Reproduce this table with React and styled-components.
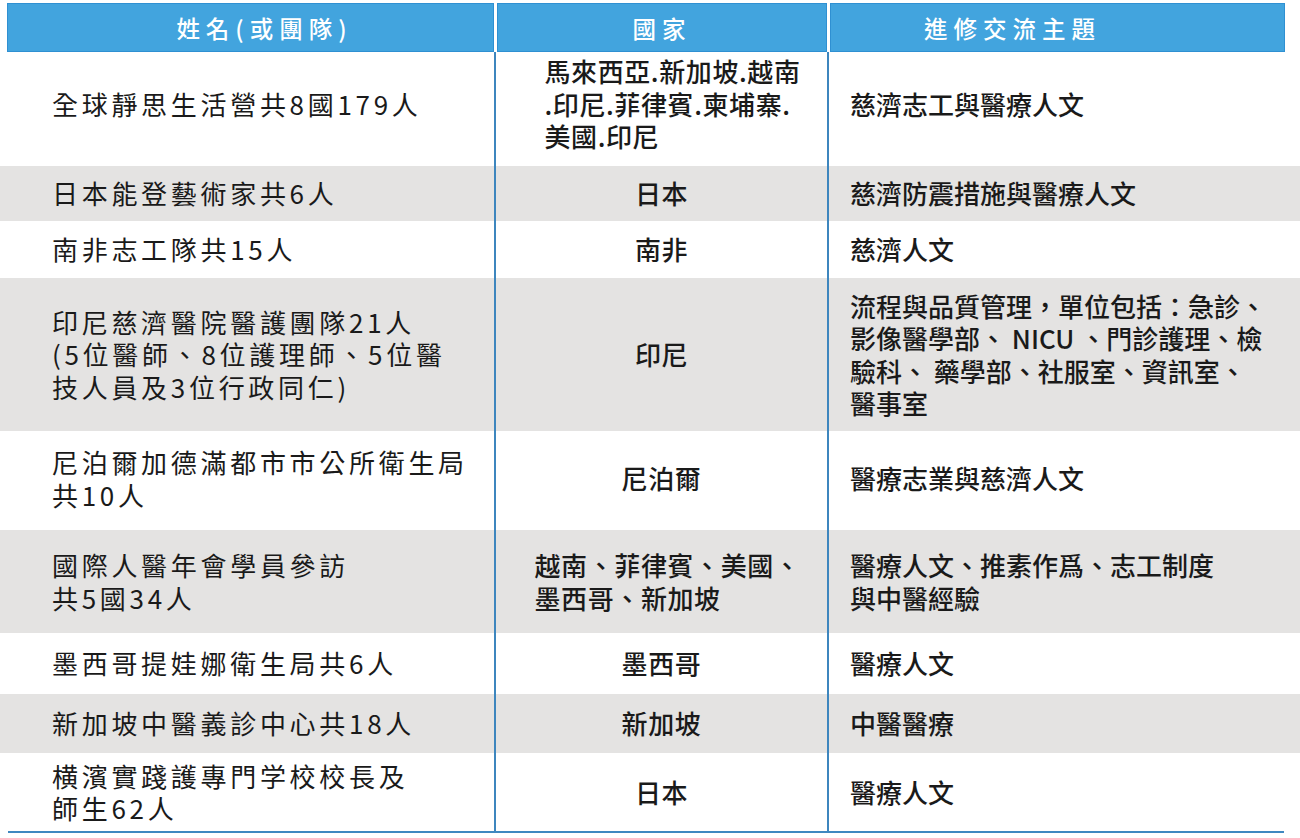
import React from "react";
import styled, { createGlobalStyle, css } from "styled-components";

const Global = createGlobalStyle`
  html, body { margin: 0; padding: 0; background: #ffffff; }
  body { font-family: "Noto Sans CJK TC", "Noto Sans", sans-serif; }
`;

const Table = styled.div`
  width: 1300px;
  padding-top: 3px;
  color: #1a1a1a;
`;

const HeaderRow = styled.div`
  display: grid;
  grid-template-columns: 487px 330px 455px;
  column-gap: 3px;
  margin-left: 7px;
  height: 49px;
`;

const HeaderCell = styled.div`
  display: flex;
  align-items: center;
  justify-content: center;
  background: #42a4de;
  border: 1px solid #2f90d2;
  color: #ffffff;
  font-size: 23.5px;
  font-weight: 500;
  letter-spacing: 6px;
  padding-left: ${(p) => p.$shiftL || 0}px;
  padding-right: ${(p) => p.$shiftR || 0}px;
`;

const Row = styled.div`
  display: grid;
  grid-template-columns: 494px 333px 458px;
  height: ${(p) => p.$h}px;
  background: ${(p) => (p.$alt ? "#e4e3e2" : "#ffffff")};
`;

const cellBase = css`
  display: flex;
  align-items: center;
  box-sizing: border-box;
  padding-bottom: ${(p) => p.$lift || 0}px;
`;

const Lines = styled.div`
  font-size: 26px;
  line-height: 32.5px;
`;

const NameCell = styled.div`
  ${cellBase};
  padding-left: 52px;
`;

const NameText = styled(Lines)`
  letter-spacing: 3.7px;
  font-weight: 400;
`;

const CountryCell = styled.div`
  ${cellBase};
  justify-content: center;
  border-left: 2px solid #3d86be;
  padding-left: ${(p) => p.$indent || 0}px;
`;

const CountryText = styled(Lines)`
  text-align: left;
  font-weight: 500;
  letter-spacing: 0.6px;
`;

const TopicCell = styled.div`
  ${cellBase};
  border-left: 2px solid #3d86be;
  padding-left: 21px;
`;

const TopicText = styled(Lines)`
  font-weight: 500;
`;

const BottomLine = styled.div`
  margin-left: 8px;
  width: 1276px;
  height: 2px;
  background: #3f88c0;
`;

const rows = [
  {
    h: 114,
    lift: 10,
    name: ["全球靜思生活營共8國179人"],
    country: ["馬來西亞.新加坡.越南", ".印尼.菲律賓.柬埔寨.", "美國.印尼"],
    indent: 22,
    topic: ["慈濟志工與醫療人文"],
  },
  { h: 55, name: ["日本能登藝術家共6人"], country: ["日本"], topic: ["慈濟防震措施與醫療人文"] },
  { h: 57, name: ["南非志工隊共15人"], country: ["南非"], topic: ["慈濟人文"] },
  {
    h: 153,
    name: ["印尼慈濟醫院醫護團隊21人", "(5位醫師、8位護理師、5位醫", "技人員及3位行政同仁)"],
    country: ["印尼"],
    topic: [
      "流程與品質管理，單位包括：急診、",
      "影像醫學部、 NICU 、門診護理、檢",
      "驗科、 藥學部、社服室、資訊室、",
      "醫事室",
    ],
  },
  { h: 99, lift: 4, name: ["尼泊爾加德滿都市市公所衛生局", "共10人"], country: ["尼泊爾"], topic: ["醫療志業與慈濟人文"] },
  {
    h: 103,
    name: ["國際人醫年會學員參訪", "共5國34人"],
    country: ["越南、菲律賓、美國、", "墨西哥、新加坡"],
    indent: 12,
    topic: ["醫療人文、推素作爲、志工制度", "與中醫經驗"],
  },
  { h: 61, name: ["墨西哥提娃娜衛生局共6人"], country: ["墨西哥"], topic: ["醫療人文"] },
  { h: 59, name: ["新加坡中醫義診中心共18人"], country: ["新加坡"], topic: ["中醫醫療"] },
  { h: 78, name: ["横濱實踐護專門学校校長及", "師生62人"], country: ["日本"], topic: ["醫療人文"] },
];

const Multi = ({ lines }) =>
  lines.map((l, i) => (
    <React.Fragment key={i}>
      {i > 0 && <br />}
      {l}
    </React.Fragment>
  ));

export default function App() {
  return (
    <>
      <Global />
      <Table>
        <HeaderRow>
          <HeaderCell $shiftL={28}>姓名(或團隊)</HeaderCell>
          <HeaderCell>國家</HeaderCell>
          <HeaderCell $shiftR={90}>進修交流主題</HeaderCell>
        </HeaderRow>
        {rows.map((r, i) => (
          <Row key={i} $h={r.h} $alt={i % 2 === 1}>
            <NameCell $lift={r.lift}>
              <NameText>
                <Multi lines={r.name} />
              </NameText>
            </NameCell>
            <CountryCell $lift={r.lift} $indent={r.indent}>
              <CountryText>
                <Multi lines={r.country} />
              </CountryText>
            </CountryCell>
            <TopicCell $lift={r.lift}>
              <TopicText>
                <Multi lines={r.topic} />
              </TopicText>
            </TopicCell>
          </Row>
        ))}
        <BottomLine />
      </Table>
    </>
  );
}
